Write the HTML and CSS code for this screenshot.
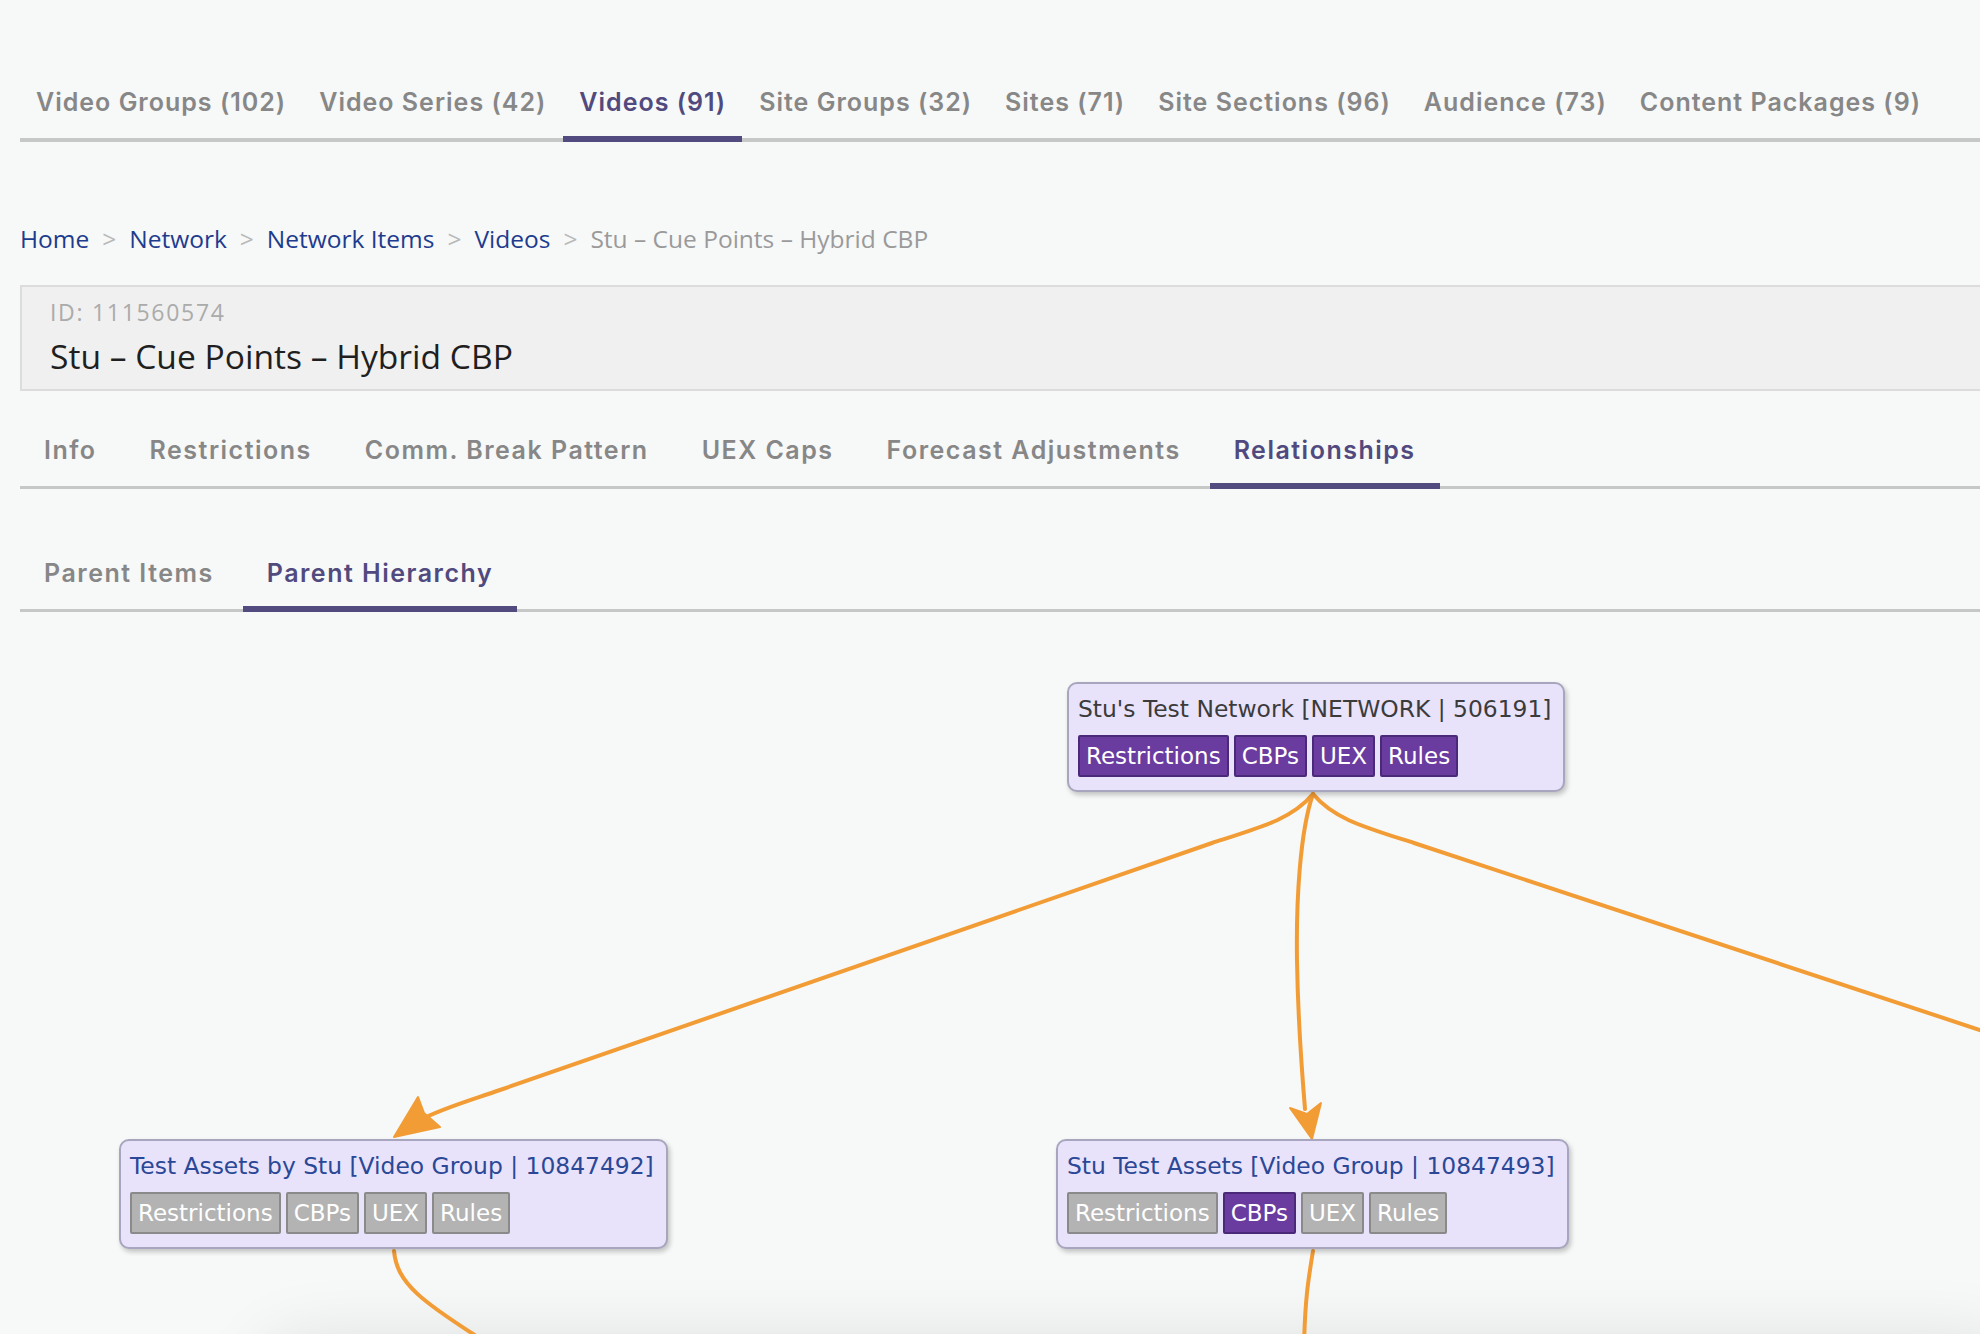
FILE: index.html
```html
<!DOCTYPE html>
<html lang="en">
<head>
<meta charset="utf-8">
<title>Stu – Cue Points – Hybrid CBP</title>
<link rel="stylesheet" href="styles.css">
</head>
<body>
<div class="page">
  <nav class="tabs tabs-top">
    <a class="tab">Video Groups (102)</a>
    <a class="tab">Video Series (42)</a>
    <a class="tab active">Videos (91)</a>
    <a class="tab">Site Groups (32)</a>
    <a class="tab">Sites (71)</a>
    <a class="tab">Site Sections (96)</a>
    <a class="tab">Audience (73)</a>
    <a class="tab">Content Packages (9)</a>
  </nav>

  <div class="breadcrumb">
    <a class="crumb">Home</a><span class="sep">&gt;</span>
    <a class="crumb">Network</a><span class="sep">&gt;</span>
    <a class="crumb">Network Items</a><span class="sep">&gt;</span>
    <a class="crumb">Videos</a><span class="sep">&gt;</span>
    <span class="crumb-current">Stu – Cue Points – Hybrid CBP</span>
  </div>

  <div class="item-header">
    <div class="item-id">ID: 111560574</div>
    <div class="item-title">Stu – Cue Points – Hybrid CBP</div>
  </div>

  <nav class="tabs tabs-sub">
    <a class="tab">Info</a>
    <a class="tab">Restrictions</a>
    <a class="tab">Comm. Break Pattern</a>
    <a class="tab">UEX Caps</a>
    <a class="tab">Forecast Adjustments</a>
    <a class="tab active">Relationships</a>
  </nav>

  <nav class="tabs tabs-sub tabs-third">
    <a class="tab">Parent Items</a>
    <a class="tab active">Parent Hierarchy</a>
  </nav>

  <div class="graph">
    <svg class="edges" width="1980" height="760" viewBox="0 611 1980 760">
      <g class="edge-lines">
        <path d="M1313,793 C1292,818 1262,826 1212,842 L500,1089 C468,1100 440,1108 418,1120"/>
        <path d="M1313,793 C1300,830 1296,900 1297,960 C1298,1020 1301,1060 1305,1108"/>
        <path d="M1313,793 C1334,818 1364,826 1414,842 L1995,1034"/>
        <path d="M394,1250 C397,1282 420,1300 492,1345"/>
        <path d="M1313,1250 C1308,1280 1305,1300 1304,1345"/>
      </g>
      <g class="edge-arrows">
        <polygon points="394,1136 418,1096 424,1112 440,1126"/>
        <polygon points="1312,1138 1290,1107 1307,1113 1321,1102"/>
      </g>
    </svg>

    <div class="node node-network" style="left:1047px;top:70px">
      <div class="node-title">Stu's Test Network [NETWORK | 506191]</div>
      <div class="node-tags">
        <span class="tag on">Restrictions</span><span class="tag on">CBPs</span><span class="tag on">UEX</span><span class="tag on">Rules</span>
      </div>
    </div>

    <div class="node node-group" style="left:99px;top:527px">
      <div class="node-title">Test Assets by Stu [Video Group | 10847492]</div>
      <div class="node-tags">
        <span class="tag">Restrictions</span><span class="tag">CBPs</span><span class="tag">UEX</span><span class="tag">Rules</span>
      </div>
    </div>

    <div class="node node-group" style="left:1036px;top:527px">
      <div class="node-title">Stu Test Assets [Video Group | 10847493]</div>
      <div class="node-tags">
        <span class="tag">Restrictions</span><span class="tag on">CBPs</span><span class="tag">UEX</span><span class="tag">Rules</span>
      </div>
    </div>
  </div>
  <div class="bottom-panel"></div>
</div>
</body>
</html>
```

FILE: styles.css
```css
html, body {
  margin: 0;
  padding: 0;
  background: #f7f8f8;
  overflow: hidden;
  height: 1334px;
}

.page {
  padding: 70px 0 0 20px;
  width: 1990px;
  font-family: "Open Sans", "Liberation Sans", sans-serif;
}

/* ---------- Tabs ---------- */
.tabs {
  display: flex;
  gap: 1px;
  border-bottom: 4px solid #c6c7c7;
  font-family: "Inter", "Open Sans", sans-serif;
  font-weight: 600;
  font-size: 25px;
  letter-spacing: 1px;
  line-height: 30px;
}

.tab {
  display: block;
  padding: 17px 16px 19px;
  margin-bottom: -4px;
  border-bottom: 6px solid transparent;
  color: #878787;
  text-decoration: none;
  white-space: nowrap;
}

.tab.active {
  color: #514a7e;
  border-bottom-color: #524b80;
}

.tabs-sub {
  margin-top: 27px;
  gap: 5px;
  border-bottom-width: 3px;
  font-size: 25px;
  letter-spacing: 1.5px;
}

.tabs-sub .tab {
  padding: 17px 24px 18px;
  margin-bottom: -3px;
}

.tabs-third {
  margin-top: 52px;
}

/* ---------- Breadcrumb ---------- */
.breadcrumb {
  margin-top: 82px;
  font-size: 24.5px;
  line-height: 30px;
  display: flex;
  align-items: center;
}

.crumb {
  color: #1d3c8e;
  text-decoration: none;
}

.sep {
  color: #b8b8b8;
  margin: 0 13px;
}

.crumb-current {
  color: #9a9a9a;
}

/* ---------- Item header ---------- */
.item-header {
  margin-top: 31px;
  background: #f0f0f0;
  border: 2px solid #dcdcdc;
  padding: 11px 28px 13px;
}

.item-id {
  font-size: 23px;
  letter-spacing: 1.7px;
  line-height: 28px;
  color: #ababab;
}

.item-title {
  margin-top: 10px;
  font-size: 33.6px;
  line-height: 40px;
  color: #1f1f1f;
}

/* ---------- Graph ---------- */
.graph {
  position: relative;
  height: 740px;
  font-family: "DejaVu Sans", "Liberation Sans", sans-serif;
}

.edges {
  position: absolute;
  left: -20px;
  top: 0;
  overflow: visible;
}

.edge-lines path {
  fill: none;
  stroke: #f29c36;
  stroke-width: 4;
  stroke-linecap: round;
}

.edge-arrows polygon {
  fill: #f29c36;
  stroke: #f29c36;
  stroke-width: 2;
  stroke-linejoin: round;
}

.node {
  position: absolute;
  background: #e8e2fb;
  border: 2px solid #a8a6bf;
  border-radius: 10px;
  padding: 9px 12px 13px 9px;
  box-shadow: 2px 3px 5px rgba(0, 0, 0, 0.22);
}

.node-title {
  font-size: 23.4px;
  line-height: 32px;
  color: #3b3b3b;
  white-space: nowrap;
}

.node-group .node-title {
  color: #2a4896;
}

.node-tags {
  display: flex;
  gap: 5px;
  margin-top: 10px;
}

.tag {
  display: block;
  background: #b3b3b3;
  border: 2px solid #8a8a8a;
  border-radius: 2px;
  color: #fff;
  font-size: 23px;
  line-height: 38px;
  padding: 0 6px;
}

.tag.on {
  background: #6a3c9f;
  border-color: #4a2a78;
}

.bottom-panel {
  margin-left: 250px;
  height: 200px;
  border-radius: 40px;
  box-shadow: 0 0 70px 12px rgba(0, 0, 0, 0.11);
  background: #eeeeee;
}
```
